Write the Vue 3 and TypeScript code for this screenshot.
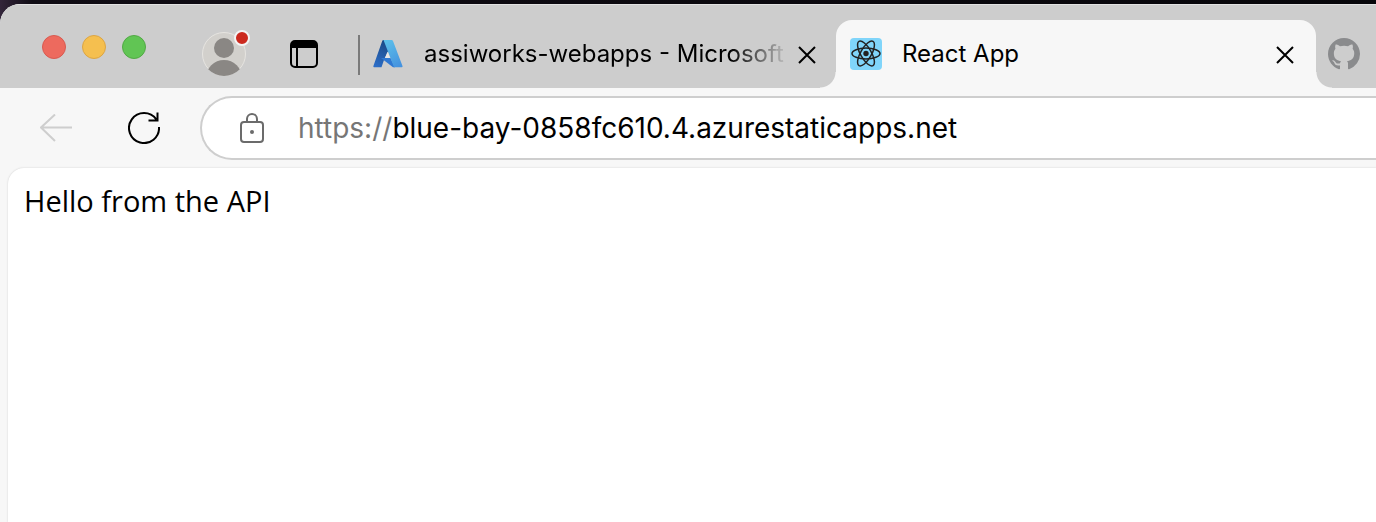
<script setup lang="ts">
import { ref } from 'vue'

const address = ref('blue-bay-0858fc610.4.azurestaticapps.net')
const lights = [
  { name: 'Close window', tone: 'red' },
  { name: 'Minimise window', tone: 'amber' },
  { name: 'Zoom window', tone: 'green' },
]
const orbits = [0, 60, 120]
</script>

<template>
  <div class="desktop">
    <div class="window">
      <header class="tabstrip">
        <div class="lights">
          <button v-for="l in lights" :key="l.tone" type="button" class="light" :class="l.tone" :aria-label="l.name"></button>
        </div>
        <button type="button" class="profile" aria-label="Profile">
          <svg width="44" height="44" viewBox="0 0 44 44">
            <defs><clipPath id="face"><circle cx="22" cy="22" r="22" /></clipPath></defs>
            <circle cx="22" cy="22" r="21.5" fill="#d2d0cc" stroke="#e6e4e0" />
            <g clip-path="url(#face)" fill="#8a8784">
              <circle cx="22" cy="16" r="10" />
              <circle cx="22" cy="46" r="18" />
            </g>
          </svg>
          <span class="dot"></span>
        </button>
        <button type="button" class="panes" aria-label="Tab actions">
          <svg width="28" height="28" viewBox="0 0 28 28">
            <rect x="1" y="1" width="26" height="26" rx="4" fill="none" stroke="#000" stroke-width="2" />
            <path d="M1 8V5a4 4 0 0 1 4-4h18a4 4 0 0 1 4 4v3z" />
            <path d="M7 8v19" stroke="#000" stroke-width="2" />
          </svg>
        </button>
        <span class="divider"></span>
        <div class="tab">
          <svg width="32" height="32" viewBox="0 0 32 32">
            <defs>
              <linearGradient id="azl" x1="0.6" y1="0" x2="0.3" y2="1"><stop offset="0" stop-color="#1b4a88" /><stop offset="1" stop-color="#2c6dc6" /></linearGradient>
              <linearGradient id="azr" x1="0.2" y1="0" x2="0.7" y2="1"><stop offset="0" stop-color="#5cbfea" /><stop offset="1" stop-color="#4593df" /></linearGradient>
            </defs>
            <path d="M11.500 2H16v12l-3.500 6.500-3 8.800H2.200q-1.200 0-.8-1.200L10.200 3q.3-1 1.300-1z" fill="url(#azl)" />
            <path d="M9 20h9.500l4.500 9.300h-2z" fill="#2f78d2" />
            <path d="M11.500 2H19.500q1.200 0 1.600 1.200l9.400 24.900q.4 1.200-.8 1.200H22z" fill="url(#azr)" />
            <path d="M15.500 13.500l2.700 6.500h-5.200z" fill="#e6e6e6" />
          </svg>
          <a href="#" class="title faded">assiworks-webapps - Microsoft</a>
          <button type="button" class="close" aria-label="Close tab">
            <svg width="18" height="18" viewBox="0 0 18 18"><path d="M1 1l16 16M17 1L1 17" stroke="#000" stroke-width="2" /></svg>
          </button>
        </div>
        <div class="tab active">
          <svg width="32" height="32" viewBox="0 0 32 32">
            <rect width="32" height="32" rx="4" fill="#80d5fa" />
            <g fill="none" stroke="#222" stroke-width="1.500">
              <ellipse v-for="a in orbits" :key="a" cx="16" cy="15.500" rx="14" ry="5.400" :transform="`rotate(${a} 16 15.500)`" />
            </g>
            <circle cx="16" cy="15.500" r="2.700" fill="#222" />
          </svg>
          <a href="#" class="title">React App</a>
          <button type="button" class="close" aria-label="Close tab">
            <svg width="18" height="18" viewBox="0 0 18 18"><path d="M1 1l16 16M17 1L1 17" stroke="#000" stroke-width="2" /></svg>
          </button>
        </div>
        <a href="#" class="tab next" aria-label="GitHub">
          <svg width="32" height="32" viewBox="0 0 16 16" fill="#8a8b8d">
            <path d="M8 0C3.580 0 0 3.580 0 8c0 3.540 2.290 6.530 5.470 7.590.4.070.55-.17.55-.38 0-.19-.01-.82-.01-1.490-2.010.37-2.530-.49-2.690-.94-.09-.23-.48-.94-.82-1.130-.28-.15-.68-.52-.01-.53.63-.01 1.080.58 1.230.82.72 1.210 1.870.87 2.330.66.070-.52.28-.87.51-1.070-1.780-.2-3.640-.89-3.640-3.950 0-.87.31-1.590.82-2.150-.08-.2-.36-1.020.08-2.120 0 0 .67-.21 2.200.82.64-.18 1.320-.27 2-.27s1.360.09 2 .27c1.530-1.040 2.200-.82 2.200-.82.44 1.100.16 1.920.08 2.120.51.56.82 1.270.82 2.150 0 3.070-1.870 3.750-3.650 3.950.29.25.54.73.54 1.480 0 1.070-.01 1.930-.01 2.200 0 .21.15.46.55.38A8.010 8.010 0 0 0 16 8c0-4.420-3.580-8-8-8z" />
          </svg>
        </a>
      </header>

      <nav class="toolbar">
        <button type="button" class="tool" aria-label="Back" disabled>
          <svg width="32" height="28" viewBox="0 0 32 28" fill="none" stroke="#cecece" stroke-width="2"><path d="M15 .5L1 13.500l14 13.500M1 13.500H32" /></svg>
        </button>
        <button type="button" class="tool" aria-label="Refresh">
          <svg width="32" height="32" viewBox="0 0 32 32" fill="none" stroke="#000" stroke-width="2"><path d="M31 15A15 15 0 1 1 28.300 7.400M29.500 .5v8h-9" /></svg>
        </button>
        <div class="address">
          <svg width="24" height="30" viewBox="0 0 24 30" fill="none" stroke="#6b6b6b" stroke-width="2">
            <rect x="1" y="9" width="22" height="20" rx="3" />
            <path d="M7 9V6a5 5 0 0 1 10 0v3" />
            <circle cx="12" cy="19" r="2" fill="#6b6b6b" stroke="none" />
          </svg>
          <label for="url">https://</label>
          <input id="url" v-model="address" type="text" spellcheck="false" />
        </div>
      </nav>

      <main class="page">Hello from the API</main>
    </div>
  </div>
</template>

<style>
body {
  margin: 0;
  background: #0b0a10;
}
</style>

<style scoped>
.desktop {
  display: flex;
  flex-direction: column;
  min-height: 100vh;
  box-sizing: border-box;
  padding-top: 4px;
  background: linear-gradient(90deg, #33253a 0, #100c14 32px, #07060a 100%);
  overflow: hidden;
  font-family: Inter, "Liberation Sans", sans-serif;
  color: #000;
}
.window {
  flex: 1;
  display: flex;
  flex-direction: column;
  background: #f7f7f7;
  border-radius: 20px 0 0 0;
  overflow: hidden;
}
button {
  display: flex;
  flex: none;
  padding: 0;
  border: 0;
  background: none;
}
svg {
  display: block;
  flex: none;
}
.tabstrip {
  display: flex;
  align-items: center;
  height: 84px;
  background: #cdcdcd;
  box-shadow: inset 0 1px #e2e2e2;
}
.lights {
  display: flex;
  flex: none;
  gap: 16px;
  margin: 2px 56px 0 42px;
}
.light {
  width: 24px;
  height: 24px;
  border-radius: 50%;
}
.red { background: #ed6a5e; border: 1px solid #d85a50; }
.amber { background: #f5bf4f; border: 1px solid #dca544; }
.green { background: #61c554; border: 1px solid #52a945; }
.profile {
  position: relative;
  margin: 16px 44px 0 0;
}
.dot {
  position: absolute;
  top: -2px;
  right: -4px;
  width: 12px;
  height: 12px;
  border: 2px solid #f4f4f4;
  border-radius: 50%;
  background: #cc2a1f;
}
.panes {
  margin: 16px 40px 0 0;
}
.divider {
  flex: none;
  width: 2px;
  height: 40px;
  margin: 18px 0 0;
  background: #7a7a7a;
}
.tab {
  display: flex;
  flex: none;
  align-items: center;
  align-self: flex-end;
  box-sizing: border-box;
  height: 68px;
  width: 476px;
  padding: 0 20px 0 12px;
}
.title {
  flex: 1;
  margin: 0 8px 0 20px;
  color: #000;
  font-size: 24px;
  line-height: 32px;
  text-decoration: none;
  white-space: nowrap;
  overflow: hidden;
}
.faded {
  mask-image: linear-gradient(90deg, #000 calc(100% - 60px), transparent);
}
.close {
  margin-top: 2px;
}
.active {
  position: relative;
  width: 480px;
  padding: 0 22px 0 14px;
  background: #f7f7f7;
  border-radius: 16px 16px 0 0;
}
.active::before,
.active::after {
  content: "";
  position: absolute;
  bottom: 0;
  width: 16px;
  height: 16px;
}
.active::before {
  right: 100%;
  background: radial-gradient(circle at 0 0, #cdcdcd 15px, #f7f7f7 16px);
}
.active::after {
  left: 100%;
  background: radial-gradient(circle at 100% 0, #cdcdcd 15px, #f7f7f7 16px);
}
.next {
  flex: 1;
  width: auto;
}
.toolbar {
  display: flex;
  align-items: center;
  gap: 56px;
  height: 80px;
  padding-left: 40px;
}
.address {
  flex: 1;
  display: flex;
  align-items: center;
  box-sizing: border-box;
  height: 64px;
  margin-left: -16px;
  padding-left: 38px;
  border: 2px solid #cecece;
  border-right: 0;
  border-radius: 32px 0 0 32px;
  background: #fff;
  font-size: 28px;
}
.address label {
  margin-left: 34px;
  color: #767676;
}
.address input {
  flex: 1;
  min-width: 0;
  padding: 0;
  border: 0;
  outline: 0;
  background: none;
  color: #000;
  font: inherit;
}
.page {
  flex: 1;
  margin-left: 8px;
  padding: 14px 16px;
  border-radius: 16px 0 0 0;
  background: #fff;
  box-shadow: 0 0 2px #ccc;
  font-family: "Open Sans", "Noto Sans", sans-serif;
  font-size: 29px;
  line-height: 38px;
}
</style>
